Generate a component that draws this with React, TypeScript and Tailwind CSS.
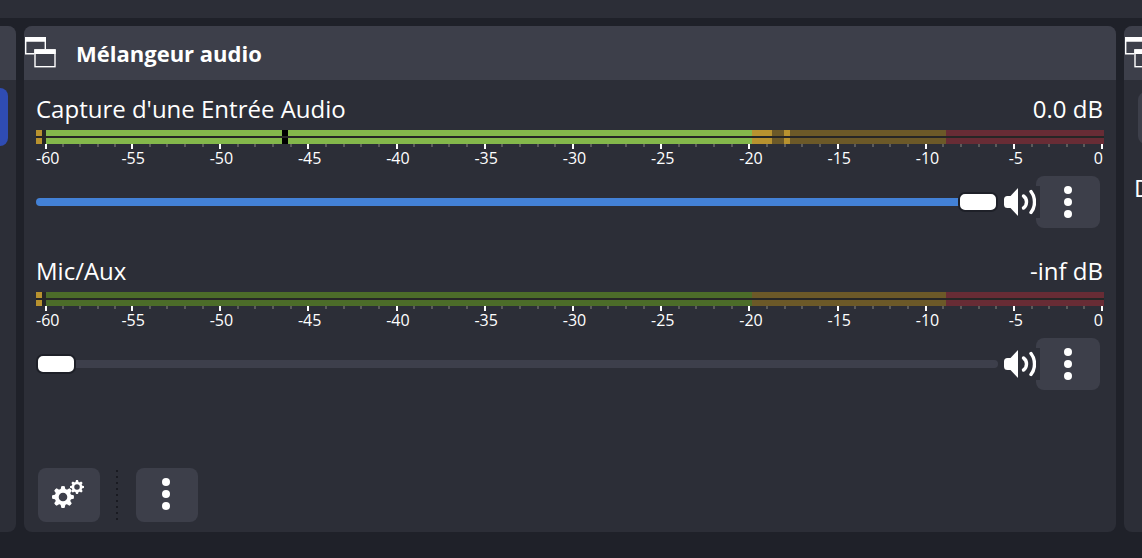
import { useState, type CSSProperties } from "react";

type Segment = { size: number; color: string };

type ChannelData = {
  id: string;
  name: string;
  level: string;
  volume: number;
  segments: Segment[];
};

const GREEN = "#84b84b";
const GREEN_DIM = "#4c6c29";
const YELLOW = "#b8922f";
const YELLOW_DIM = "#6c5928";
const RED_DIM = "#682c35";

const channels: ChannelData[] = [
  {
    id: "capture",
    name: "Capture d'une Entrée Audio",
    level: "0.0 dB",
    volume: 100,
    segments: [
      { size: 236, color: GREEN },
      { size: 6, color: "#000000" },
      { size: 464, color: GREEN },
      { size: 20, color: YELLOW },
      { size: 12, color: YELLOW_DIM },
      { size: 6, color: YELLOW },
      { size: 156, color: YELLOW_DIM },
      { size: 158, color: RED_DIM },
    ],
  },
  {
    id: "mic",
    name: "Mic/Aux",
    level: "-inf dB",
    volume: 0,
    segments: [
      { size: 706, color: GREEN_DIM },
      { size: 194, color: YELLOW_DIM },
      { size: 158, color: RED_DIM },
    ],
  },
];

const innerLabels = [-55, -50, -45, -40, -35, -30, -25, -20, -15, -10, -5];

function DockIcon() {
  return (
    <svg viewBox="0 1 32 32" className="h-8 w-8 shrink-0" aria-hidden="true">
      <g fill="none" stroke="#fff" strokeWidth="1.4">
        <path d="M10 17.700H1.700V2H21.300V13" />
        <rect x="11" y="14" width="20" height="16.700" />
      </g>
      <path d="M1 1h21v4.800H1zM10.300 13.300h21.400v4.700H10.300z" fill="#fff" />
    </svg>
  );
}

function DotsIcon() {
  return (
    <svg viewBox="0 0 8 32" className="h-8 w-2" fill="#fff" aria-hidden="true">
      <circle cx="4" cy="4" r="4" />
      <circle cx="4" cy="16" r="4" />
      <circle cx="4" cy="28" r="4" />
    </svg>
  );
}

function SpeakerIcon() {
  return (
    <svg viewBox="0 0 32 32" className="h-8 w-8" aria-hidden="true">
      <path
        d="M14 2v28L6.500 22H3.500Q0 22 0 18.500V13.500Q0 10 3.500 10H6.500z"
        fill="#fff"
      />
      <g fill="none" stroke="#fff" strokeWidth="3.400" strokeLinecap="round">
        <path d="M19.500 10Q22.500 12 22.500 16T19.500 22" />
        <path d="M27 5.500Q30.500 10 30.500 16T27 26.500" />
      </g>
    </svg>
  );
}

function Gear({ cx, cy, size }: { cx: number; cy: number; size: number }) {
  return (
    <g transform={`translate(${cx} ${cy}) scale(${size})`}>
      <circle r="6.300" fill="none" stroke="#fff" strokeWidth="4" />
      {[0, 45, 90, 135, 180, 225, 270, 315].map((angle) => (
        <path
          key={angle}
          d="M-2.500 -7L-1.700 -10.700Q0 -11.300 1.700 -10.700L2.500 -7z"
          fill="#fff"
          transform={`rotate(${angle})`}
        />
      ))}
    </g>
  );
}

function GearsIcon() {
  return (
    <svg viewBox="0 0 32 28" className="h-7 w-8" aria-hidden="true">
      <Gear cx={11} cy={17} size={1} />
      <Gear cx={25} cy={7} size={0.64} />
    </svg>
  );
}

function MeterBar({ segments }: { segments: Segment[] }) {
  return (
    <div className="flex h-[6px]">
      <div className="mr-1 w-[6px] bg-[#b8922f]" />
      {segments.map((segment, index) => (
        <div
          key={index}
          className="basis-0"
          style={{ flexGrow: segment.size, backgroundColor: segment.color }}
        />
      ))}
    </div>
  );
}

function TickGroup({ className }: { className: string }) {
  return (
    <div className={`flex ${className}`}>
      <div className="flex-1">
        <div className="h-[5px] w-[2px] bg-white" />
      </div>
      {[1, 2, 3, 4].map((tick) => (
        <div key={tick} className="flex-1">
          <div className="h-[3px] w-[2px] bg-[#5b5b5b]" />
        </div>
      ))}
    </div>
  );
}

function MeterScale() {
  return (
    <div aria-hidden="true">
      <div className="flex h-[5px] pr-px pl-[9px]">
        <TickGroup className="w-[86px]" />
        {innerLabels.map((label) => (
          <TickGroup key={label} className="flex-1" />
        ))}
        <div className="w-[2px] bg-white" />
      </div>
      <div className="flex pr-px text-[16px] leading-[18px]">
        <span className="w-[53px]">-60</span>
        {innerLabels.map((label) => (
          <span key={label} className="flex-1 text-center">
            {label}
          </span>
        ))}
        <span className="w-[43px] text-right">0</span>
      </div>
    </div>
  );
}

function Channel({ channel }: { channel: ChannelData }) {
  const [volume, setVolume] = useState(channel.volume);
  const [muted, setMuted] = useState(false);
  const track: CSSProperties = {
    backgroundImage: `linear-gradient(to right, #4381d6 ${volume}%, #3d3f4b ${volume}%)`,
  };

  return (
    <section>
      <div className="flex justify-between pr-px text-[24px] leading-[34px]">
        <label htmlFor={channel.id}>{channel.name}</label>
        <span>{channel.level}</span>
      </div>
      <div className="mt-1 flex flex-col gap-[2px] bg-[#262626]">
        <MeterBar segments={channel.segments} />
        <MeterBar segments={channel.segments} />
      </div>
      <MeterScale />
      <div className="mt-[9px] flex items-center pr-1">
        <input
          id={channel.id}
          type="range"
          min={0}
          max={100}
          value={volume}
          onChange={(event) => setVolume(Number(event.target.value))}
          style={track}
          className="mr-[6px] h-2 min-w-0 flex-1 appearance-none rounded-full [&::-webkit-slider-thumb]:h-5 [&::-webkit-slider-thumb]:w-10 [&::-webkit-slider-thumb]:appearance-none [&::-webkit-slider-thumb]:rounded-[7px] [&::-webkit-slider-thumb]:border-2 [&::-webkit-slider-thumb]:border-[#1e2028] [&::-webkit-slider-thumb]:bg-white"
        />
        <button
          type="button"
          aria-label={`Muet ${channel.name}`}
          aria-pressed={muted}
          onClick={() => setMuted(!muted)}
          className="z-10 h-8 w-9 bg-[#2c2e37]"
        >
          <SpeakerIcon />
        </button>
        <button
          type="button"
          aria-label={`Options ${channel.name}`}
          className="-ml-1 flex h-[52px] w-16 items-center justify-center rounded-lg bg-[#3d3f4a]"
        >
          <DotsIcon />
        </button>
      </div>
    </section>
  );
}

export default function App() {
  return (
    <div
      className="flex min-h-screen flex-col bg-[#1f2129] text-white"
      style={{ fontFamily: '"Open Sans", "Noto Sans", sans-serif' }}
    >
      <div className="h-[18px] bg-[#2c2e37]" />
      <div className="mt-2 mb-[26px] flex flex-1 gap-2">
        <aside className="w-4 overflow-hidden rounded-r-lg bg-[#2c2e37]">
          <div className="h-[54px] bg-[#3d3f4a]" />
          <div className="mt-2 h-[58px] w-2 rounded-r-lg bg-[#2f4cb3]" />
        </aside>

        <main className="flex min-w-0 flex-1 flex-col overflow-hidden rounded-lg bg-[#2c2e37]">
          <header className="flex h-[54px] items-center gap-5 bg-[#3d3f4a]">
            <DockIcon />
            <h1 className="text-[22px] leading-8 font-bold">Mélangeur audio</h1>
          </header>
          <div className="flex flex-1 flex-col gap-[26px] px-3 pt-3">
            {channels.map((channel) => (
              <Channel key={channel.id} channel={channel} />
            ))}
          </div>
          <footer className="flex items-center px-[14px] pb-[10px]">
            <button
              type="button"
              aria-label="Propriétés audio avancées"
              className="flex h-[54px] w-[62px] items-center justify-center rounded-lg bg-[#3d3f4a] pr-[2px] pb-[2px]"
            >
              <GearsIcon />
            </button>
            <div className="mr-[18px] ml-4 h-[50px] w-[2px] bg-[repeating-linear-gradient(to_bottom,#191a21_0px,#191a21_2px,transparent_2px,transparent_6px)]" />
            <button
              type="button"
              aria-label="Menu du mélangeur"
              className="flex h-[54px] w-[62px] items-center justify-center rounded-lg bg-[#3d3f4a] pr-[2px] pb-[2px]"
            >
              <DotsIcon />
            </button>
          </footer>
        </main>

        <aside className="w-[18px] overflow-hidden rounded-l-lg bg-[#2c2e37]">
          <div className="flex h-[54px] items-center bg-[#3d3f4a]">
            <DockIcon />
          </div>
          <div className="mt-3 ml-[14px] h-[52px] w-16 rounded-lg bg-[#3d3f4a]" />
          <div className="mt-7 ml-[10px] text-[24px] leading-8">D</div>
        </aside>
      </div>
    </div>
  );
}
